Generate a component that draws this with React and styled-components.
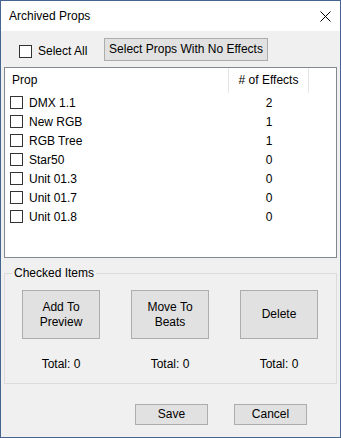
import React from "react";
import styled, { createGlobalStyle } from "styled-components";

const GlobalStyle = createGlobalStyle`
  html, body {
    margin: 0;
    padding: 0;
    background: #ffffff;
  }
  * {
    box-sizing: border-box;
  }
`;

const Window = styled.div`
  width: 341px;
  height: 438px;
  border: 1px solid #44658f;
  background: #f0f0f0;
  display: flex;
  flex-direction: column;
  font-family: "Liberation Sans", Arial, sans-serif;
  font-size: 12px;
  color: #000;
`;

const TitleBar = styled.div`
  height: 30px;
  background: #ffffff;
  display: flex;
  align-items: center;
  justify-content: space-between;
  padding: 0 9px 0 8px;
`;

const Title = styled.span`
  font-size: 12px;
  padding-bottom: 1px;
`;

const CloseIcon = () => (
  <svg width="11" height="11" viewBox="0 0 11 11">
    <path d="M0.5 0.5 L10.5 10.5 M10.5 0.5 L0.5 10.5" stroke="#000" strokeWidth="1" />
  </svg>
);

const TopRow = styled.div`
  display: flex;
  align-items: center;
  height: 23px;
  margin-top: 7px;
  padding-left: 18px;
`;

const CheckLabel = styled.label`
  display: flex;
  align-items: center;
  gap: 6px;
  width: 85px;
  padding-top: 3px;
`;

const Box = styled.span`
  width: 13px;
  height: 13px;
  border: 1px solid #333333;
  background: #ffffff;
  flex-shrink: 0;
`;

const Button = styled.button`
  font-family: inherit;
  font-size: 12px;
  color: #000;
  background: #e1e1e1;
  border: 1px solid #adadad;
  padding: 0;
  width: ${({ $w }) => $w}px;
  height: ${({ $h }) => $h}px;
  line-height: 15px;
`;

const ListBox = styled.div`
  margin: 6px 3px 0;
  height: 191px;
  border: 1px solid #828790;
  background: #ffffff;
`;

const Header = styled.div`
  display: flex;
  height: 25px;
`;

const HeadCell = styled.div`
  display: flex;
  align-items: center;
  justify-content: ${({ $center }) => ($center ? "center" : "flex-start")};
  width: ${({ $w }) => $w}px;
  padding-left: ${({ $pad }) => $pad || 0}px;
  border-right: 1px solid #e5e5e5;
  padding-bottom: 1px;
`;

const Row = styled.div`
  display: flex;
  align-items: center;
  height: 19px;
  padding-left: 5px;
`;

const RowName = styled.div`
  display: flex;
  align-items: center;
  gap: 6px;
  width: 219px;
`;

const RowCount = styled.div`
  width: 80px;
  text-align: center;
`;

const Group = styled.fieldset`
  margin: 8px 3px 0;
  height: 118px;
  border: 1px solid #dcdcdc;
  padding: 0;
  min-width: 0;
`;

const Legend = styled.legend`
  margin-left: 7px;
  padding: 0 2px;
`;

const ActionGrid = styled.div`
  display: grid;
  grid-template-columns: repeat(3, 78px);
  column-gap: 31px;
  row-gap: 18px;
  padding: 10px 0 0 17px;
`;

const Total = styled.div`
  text-align: center;
`;

const Footer = styled.div`
  display: flex;
  justify-content: flex-end;
  gap: 26px;
  padding: 20px 33px 0 0;
`;

const props = [
  ["DMX 1.1", 2],
  ["New RGB", 1],
  ["RGB Tree", 1],
  ["Star50", 0],
  ["Unit 01.3", 0],
  ["Unit 01.7", 0],
  ["Unit 01.8", 0],
];

const actions = [
  ["Add To", "Preview"],
  ["Move To", "Beats"],
  ["Delete"],
];

export default function App() {
  return (
    <>
      <GlobalStyle />
      <Window>
        <TitleBar>
          <Title>Archived Props</Title>
          <CloseIcon />
        </TitleBar>

        <TopRow>
          <CheckLabel>
            <Box />
            Select All
          </CheckLabel>
          <Button $w={164} $h={23}>Select Props With No Effects</Button>
        </TopRow>

        <ListBox>
          <Header>
            <HeadCell $w={224} $pad={7}>Prop</HeadCell>
            <HeadCell $w={80} $center>
              # of Effects
            </HeadCell>
          </Header>
          {props.map(([name, count]) => (
            <Row key={name}>
              <RowName>
                <Box />
                {name}
              </RowName>
              <RowCount>{count}</RowCount>
            </Row>
          ))}
        </ListBox>

        <Group>
          <Legend>Checked Items</Legend>
          <ActionGrid>
            {actions.map((lines) => (
              <Button key={lines.join(" ")} $w={78} $h={49}>
                {lines.map((l, i) => (
                  <React.Fragment key={l}>
                    {i > 0 && <br />}
                    {l}
                  </React.Fragment>
                ))}
              </Button>
            ))}
            {actions.map((lines) => (
              <Total key={lines[0]}>Total: 0</Total>
            ))}
          </ActionGrid>
        </Group>

        <Footer>
          <Button $w={73} $h={21}>Save</Button>
          <Button $w={73} $h={21}>Cancel</Button>
        </Footer>
      </Window>
    </>
  );
}
